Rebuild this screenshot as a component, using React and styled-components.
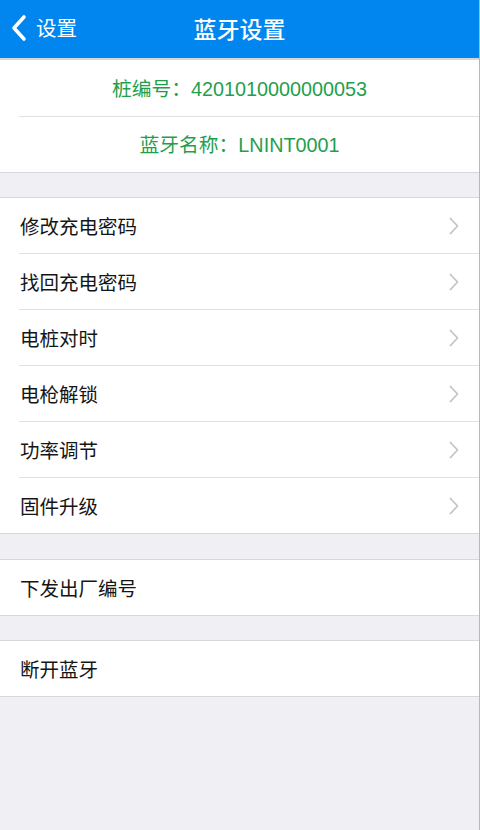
import React from 'react';
import styled, { createGlobalStyle } from 'styled-components';

const GlobalStyle = createGlobalStyle`
	* {
		box-sizing: border-box;
	}
	body {
		margin: 0;
		background-color: #efeff4;
		font-family: 'Noto Sans CJK SC', 'Noto Sans', sans-serif;
	}
`;

const menuItems = ['修改充电密码', '找回充电密码', '电桩对时', '电枪解锁', '功率调节', '固件升级'];

const BackIcon = () => (
	<svg width='18' height='28' viewBox='0 0 18 28'>
		<path d='M14 3 L4 14 L14 25' fill='none' stroke='#fff' strokeWidth='3.6' strokeLinecap='round' strokeLinejoin='round' />
	</svg>
);

const Chevron = () => (
	<svg width='10' height='18' viewBox='0 0 10 18'>
		<path d='M1.5 1.5 L8.5 9 L1.5 16.5' fill='none' stroke='#c4c4c9' strokeWidth='1.8' strokeLinecap='round' strokeLinejoin='round' />
	</svg>
);

const App = () => {
	return (
		<>
			<GlobalStyle />
			<Page>
				<Header>
					<Back>
						<BackIcon />
						<span>设置</span>
					</Back>
					<Title>蓝牙设置</Title>
				</Header>
				<Section $top={false}>
					<InfoRow>桩编号：4201010000000053</InfoRow>
					<InfoRow>蓝牙名称：LNINT0001</InfoRow>
				</Section>
				<Section $gap={24}>
					{menuItems.map((item) => (
						<Row key={item}>
							<Label>{item}</Label>
							<Chevron />
						</Row>
					))}
				</Section>
				<Section $gap={25}>
					<Row>
						<Label>下发出厂编号</Label>
					</Row>
				</Section>
				<Section $gap={24}>
					<Row>
						<Label>断开蓝牙</Label>
					</Row>
				</Section>
			</Page>
		</>
	);
};

const Page = styled.div`
	width: 480px;
	min-height: 830px;
	background-color: #efeff4;
	border-right: 1px solid #b8b8bc;
`;

const Header = styled.div`
	position: relative;
	height: 60px;
	background-color: #0185ef;
	border-bottom: 2px solid #d6d6da;
	display: flex;
	align-items: center;
	justify-content: center;
	color: #fff;
`;

const Back = styled.div`
	position: absolute;
	left: 10px;
	top: 14px;
	display: flex;
	align-items: center;
	gap: 8px;
	font-size: 20.5px;

	span {
		margin-top: -2px;
	}
`;

const Title = styled.h1`
	margin: -2px 0 0;
	font-size: 23px;
	font-weight: 500;
`;

const Section = styled.div`
	margin-top: ${(p) => (p.$gap ? p.$gap : 0)}px;
	background-color: #fff;
	border-top: ${(p) => (p.$top === false ? 'none' : '1px solid #d8d8dc')};
	border-bottom: 1px solid #d8d8dc;
	display: flex;
	flex-direction: column;
`;

const InfoRow = styled.div`
	height: 56px;
	display: flex;
	align-items: center;
	justify-content: center;
	color: #1f9f4d;
	font-family: 'Liberation Sans', 'Noto Sans CJK SC', sans-serif;
	font-size: 19.8px;
	padding-bottom: 2px;

	& + & {
		margin-left: 19px;
		padding-right: 19px;
		border-top: 1px solid #e0e0e4;
		height: 56px;
	}
`;

const Row = styled.div`
	height: 55px;
	display: flex;
	align-items: center;
	justify-content: space-between;
	padding: 0 20px 0 20px;
	position: relative;

	& + & {
		height: 56px;
		border-top: 1px solid #e0e0e4;
		margin-left: 19px;
		padding-left: 1px;
	}
`;

const Label = styled.span`
	font-size: 19.5px;
	color: #151515;
`;

export default App;
